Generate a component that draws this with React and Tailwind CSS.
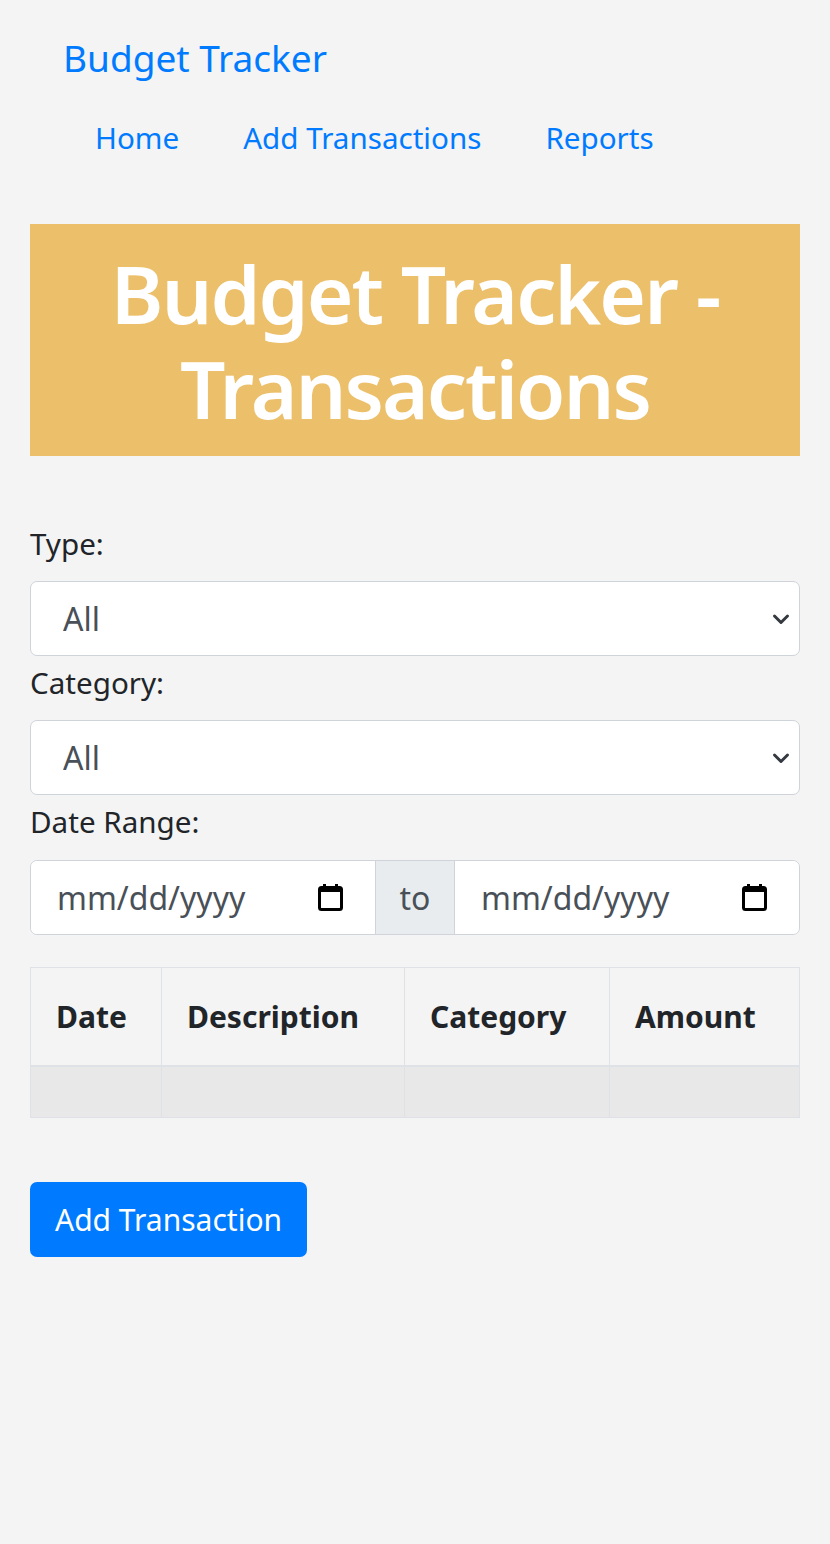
import { useState } from 'react'

function Chevron() {
  return (
    <svg className="pointer-events-none absolute right-[10px] top-1/2 -translate-y-1/2" width="18" height="11" viewBox="0 0 18 11">
      <path d="M2.5 2.5l6.5 6.5 6.5-6.5" fill="none" stroke="#343a40" strokeWidth="3" strokeLinecap="round" strokeLinejoin="round" />
    </svg>
  )
}

function CalendarIcon() {
  return (
    <svg width="25" height="27" viewBox="0 0 25 27">
      <rect x="5" y="0" width="3" height="5" fill="#000" />
      <rect x="17" y="0" width="3" height="5" fill="#000" />
      <rect x="1.5" y="3.5" width="22" height="22" rx="2" fill="none" stroke="#000" strokeWidth="3" />
      <rect x="1.5" y="3" width="22" height="5" fill="#000" />
    </svg>
  )
}

function DateField() {
  return (
    <div className="flex flex-1 items-center justify-between bg-white pl-[26px] pr-[32px] text-[32px] text-[#495057]">
      <span>mm/dd/yyyy</span>
      <CalendarIcon />
    </div>
  )
}

function FilterSelect({ label, value, onChange }) {
  return (
    <>
      <label className="mt-[5px] mb-[16px] block text-[29.6px] leading-[43px]">{label}</label>
      <div className="relative">
        <select
          value={value}
          onChange={(e) => onChange(e.target.value)}
          className="h-[75px] w-full appearance-none rounded-[7px] border border-[#ced4da] bg-white pl-[32px] text-[32px] text-[#495057] outline-none"
        >
          <option>All</option>
        </select>
        <Chevron />
      </div>
    </>
  )
}

export default function App() {
  const [type, setType] = useState('All')
  const [category, setCategory] = useState('All')

  return (
    <div className="min-h-screen bg-[#f4f4f4] pb-10 font-['Noto_Sans',sans-serif] text-[#212529]">
      <nav className="px-[63px] pt-[31px]">
        <a className="block text-[37px] leading-[54px] text-[#007bff]">Budget Tracker</a>
        <ul className="mt-[31px] flex text-[29.6px] leading-[43px] text-[#007bff]">
          <li className="px-[32px]">Home</li>
          <li className="px-[32px]">Add Transactions</li>
          <li className="px-[32px]">Reports</li>
        </ul>
      </nav>

      <main className="px-[30px]">
        <h1 className="mt-[65px] bg-[#ecbf6b] py-[21px] text-center text-[80px] font-semibold leading-[95px] tracking-[-2px] text-white">
          Budget Tracker - Transactions
        </h1>

        <div className="mt-[66px]">
          <FilterSelect label="Type:" value={type} onChange={setType} />
          <FilterSelect label="Category:" value={category} onChange={setCategory} />
          <label className="mt-[5px] mb-[17px] block text-[29.6px] leading-[43px]">Date Range:</label>
          <div className="flex h-[75px] overflow-hidden rounded-[7px] border border-[#ced4da]">
            <DateField />
            <div className="flex w-[80px] items-center justify-center border-x border-[#ced4da] bg-[#e9ecef] text-[32px] text-[#495057]">
              to
            </div>
            <DateField />
          </div>
        </div>

        <table className="mt-[32px] w-full border-collapse text-[30px]">
          <thead>
            <tr className="h-[98px]">
              <th className="w-[131px] border border-[#dee2e6] pl-[25px] text-left font-bold">Date</th>
              <th className="w-[243px] border border-[#dee2e6] pl-[25px] text-left font-bold">Description</th>
              <th className="w-[205px] border border-[#dee2e6] pl-[25px] text-left font-bold">Category</th>
              <th className="border border-[#dee2e6] pl-[25px] text-left font-bold">Amount</th>
            </tr>
          </thead>
          <tbody>
            <tr className="h-[52px] border-t-2 border-[#dee2e6] bg-[#e8e8e8]">
              <td className="border border-[#dee2e6]"></td>
              <td className="border border-[#dee2e6]"></td>
              <td className="border border-[#dee2e6]"></td>
              <td className="border border-[#dee2e6]"></td>
            </tr>
          </tbody>
        </table>

        <button className="mt-[64px] h-[75px] rounded-[7px] bg-[#007bff] px-[25px] text-[30px] text-white">
          Add Transaction
        </button>
      </main>
    </div>
  )
}
